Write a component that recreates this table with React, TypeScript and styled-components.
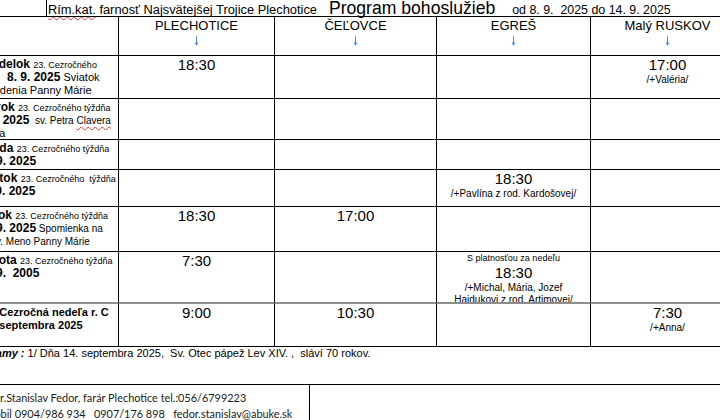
import React, { ReactNode } from 'react'
import styled, { createGlobalStyle } from 'styled-components'

const GlobalStyle = createGlobalStyle`
  html, body {
    margin: 0;
    padding: 0;
    background: #fff;
  }
  body {
    overflow: hidden;
    font-family: "Liberation Sans", Arial, sans-serif;
    color: #000;
  }
`

const Page = styled.div`
  width: 720px;
  height: 420px;
  overflow: hidden;
  background: #fff;
`

// the document is wider than the window, its left edge sits off screen
const Sheet = styled.div`
  margin-left: -28px;
  width: 772px;
`

const TitleBar = styled.div`
  height: 16px;
  margin-left: 74px;
  padding-left: 1px;
  border-left: 1px solid #000;
  font-size: 12px;
  line-height: 16px;
  white-space: pre;
`

const Parish = styled.span`
  font-size: 12.85px;
`

const ProgramTitle = styled.span`
  font-size: 17.6px;
  margin-left: 12px;
`

const DateRange = styled.span`
  font-size: 12.4px;
  margin-left: 17px;
`

const Spell = styled.span`
  text-decoration: underline wavy #e23b3b;
  text-decoration-thickness: 1px;
  text-underline-offset: 2px;
`

const Grid = styled.div`
  display: grid;
  grid-template-columns: 147px 156px 162px 154px 154px;
  grid-template-rows: 39px 43px 41px 30px 37px 45px 52px 43px;
  border-top: 1px solid #000;
`

const Cell = styled.div<{ $heavy?: boolean }>`
  box-sizing: border-box;
  border-right: 1px solid #000;
  border-bottom: ${(p) => (p.$heavy ? '2px solid #8e8e8e' : '1px solid #000')};
  overflow: hidden;
`

const HeadCell = styled(Cell)`
  display: flex;
  flex-direction: column;
  align-items: center;
  padding-top: 1px;
  font-size: 13px;
  line-height: 15px;
`

const ArrowMark = styled.svg`
  margin-top: 3px;
  display: block;
`

const DayCell = styled(Cell)`
  padding: 2px 0 0 4px;
  font-size: 9px;
  white-space: pre;
`

const DayLine = styled.div<{ $indent?: number }>`
  height: 13px;
  line-height: 13px;
  padding-left: ${(p) => p.$indent ?? 0}px;
`

const DayName = styled.span`
  font-size: 12px;
  font-weight: 700;
`

const Week = styled.span`
  font-size: 9px;
`

const DateText = styled.span<{ $size?: number }>`
  font-size: ${(p) => p.$size ?? 12}px;
  font-weight: 700;
`

const Feast = styled.span<{ $size?: number }>`
  font-size: ${(p) => p.$size ?? 11}px;
`

const MassCell = styled(Cell)`
  text-align: center;
  white-space: nowrap;
`

const PreNote = styled.div`
  font-size: 9px;
  line-height: 12px;
`

const Time = styled.div`
  font-size: 15px;
  line-height: 18px;
`

const Intention = styled.div`
  font-size: 10px;
  line-height: 11.5px;
`

const Notes = styled.div`
  height: 37px;
  padding-left: 3px;
  font-size: 11px;
  line-height: 13px;
  white-space: pre;
`

const NotesLabel = styled.span`
  font-weight: 700;
  font-style: italic;
`

const Footer = styled.div`
  border-top: 1px solid #000;
  display: flex;
`

const Contact = styled.div`
  width: 338px;
  height: 40px;
  box-sizing: border-box;
  border-right: 1px solid #000;
  padding: 5px 0 0 12.5px;
  font-family: Lato, "Open Sans", sans-serif;
  font-size: 10.9px;
  line-height: 16px;
  color: #1a1a1a;
  white-space: pre;
`

const Arrow = () => (
  <ArrowMark width="7" height="10" viewBox="0 0 7 10">
    <line x1="3.5" y1="0" x2="3.5" y2="7" stroke="#5b8bd4" strokeWidth="1" />
    <polygon points="1.5,6.5 5.5,6.5 3.5,10" fill="#5b8bd4" />
  </ArrowMark>
)

type Mass = { pre?: string; time: string; notes?: ReactNode[] }

type Row = {
  day: { content: ReactNode; indent?: number }[]
  masses: (Mass | null)[]
}

const parishes = ['PLECHOTICE', 'ČEĽOVCE', 'EGREŠ', 'Malý RUSKOV']

const rows: Row[] = [
  {
    day: [
      { content: <><DayName>Pondelok </DayName><Week>23. Cezročného</Week></> },
      { indent: 31, content: <><DateText>8. 9. 2025</DateText><Feast> Sviatok</Feast></> },
      { content: <Feast>Narodenia Panny Márie</Feast> },
    ],
    masses: [{ time: '18:30' }, null, null, { time: '17:00', notes: ['/+Valéria/'] }],
  },
  {
    day: [
      { content: <><DayName>Utorok </DayName><Week>23. Cezročného týždňa</Week></> },
      { content: <><DateText>9. 9. 2025</DateText><Feast $size={10}>  sv. Petra <Spell>Clavera</Spell></Feast></> },
      { content: <Feast>kňaza</Feast> },
    ],
    masses: [null, null, null, null],
  },
  {
    day: [
      { content: <><DayName>Streda </DayName><Week>23. Cezročného týždňa</Week></> },
      { content: <DateText>10. 9. 2025</DateText> },
    ],
    masses: [null, null, null, null],
  },
  {
    day: [
      { content: <><DayName>Štvrtok </DayName><Week>23. Cezročného  týždňa</Week></> },
      { content: <DateText>11. 9. 2025</DateText> },
    ],
    masses: [null, null, { time: '18:30', notes: ['/+Pavlína z rod. Kardošovej/'] }, null],
  },
  {
    day: [
      { content: <><DayName>Piatok </DayName><Week>23. Cezročného týždňa</Week></> },
      { content: <><DateText>12. 9. 2025</DateText><Feast $size={10}> Spomienka na</Feast></> },
      { content: <Feast $size={10}>Najsv. Meno Panny Márie</Feast> },
    ],
    masses: [{ time: '18:30' }, { time: '17:00' }, null, null],
  },
  {
    day: [
      { content: <><DayName>Sobota </DayName><Week>23. Cezročného týždňa</Week></> },
      { content: <DateText>13. 9.  2005</DateText> },
    ],
    masses: [
      { time: '7:30' },
      null,
      {
        pre: 'S platnosťou za nedeľu',
        time: '18:30',
        notes: [
          '/+Michal, Mária, Jozef',
          <><Spell>Hajdukovi</Spell> z rod. <Spell>Artimovej</Spell>/</>,
        ],
      },
      null,
    ],
  },
  {
    day: [
      { indent: 5, content: <DateText $size={11}>24. Cezročná nedeľa r. C</DateText> },
      { indent: 5, content: <DateText $size={11}>14. septembra 2025</DateText> },
    ],
    masses: [{ time: '9:00' }, { time: '10:30' }, null, { time: '7:30', notes: ['/+Anna/'] }],
  },
]

export default function App() {
  return (
    <Page>
      <GlobalStyle />
      <Sheet>
        <TitleBar>
          <Parish><Spell>Rím.kat.</Spell> farnosť Najsvätejšej Trojice Plechotice</Parish>
          <ProgramTitle>Program bohoslužieb</ProgramTitle>
          <DateRange>od 8. 9.  2025 do 14. 9. 2025</DateRange>
        </TitleBar>

        <Grid>
          <HeadCell />
          {parishes.map((name) => (
            <HeadCell key={name}>
              <span>{name}</span>
              <Arrow />
            </HeadCell>
          ))}

          {rows.map((row, r) => {
            const heavy = r === rows.length - 2
            return (
              <React.Fragment key={r}>
                <DayCell $heavy={heavy}>
                  {row.day.map((line, i) => (
                    <DayLine key={i} $indent={line.indent}>
                      {line.content}
                    </DayLine>
                  ))}
                </DayCell>
                {row.masses.map((mass, c) => (
                  <MassCell key={c} $heavy={heavy}>
                    {mass && (
                      <>
                        {mass.pre && <PreNote>{mass.pre}</PreNote>}
                        <Time>{mass.time}</Time>
                        {mass.notes?.map((n, i) => (
                          <Intention key={i}>{n}</Intention>
                        ))}
                      </>
                    )}
                  </MassCell>
                ))}
              </React.Fragment>
            )
          })}
        </Grid>

        <Notes>
          <NotesLabel>Oznamy :</NotesLabel> 1/ Dňa 14. septembra 2025,  Sv. Otec pápež Lev XIV. ,  sláví 70 rokov.
        </Notes>

        <Footer>
          <Contact>
            <div>Mgr.Stanislav Fedor, farár Plechotice tel.:056/6799223</div>
            <div>Mobil 0904/986 934   0907/176 898   fedor.stanislav@abuke.sk</div>
          </Contact>
        </Footer>
      </Sheet>
    </Page>
  )
}
